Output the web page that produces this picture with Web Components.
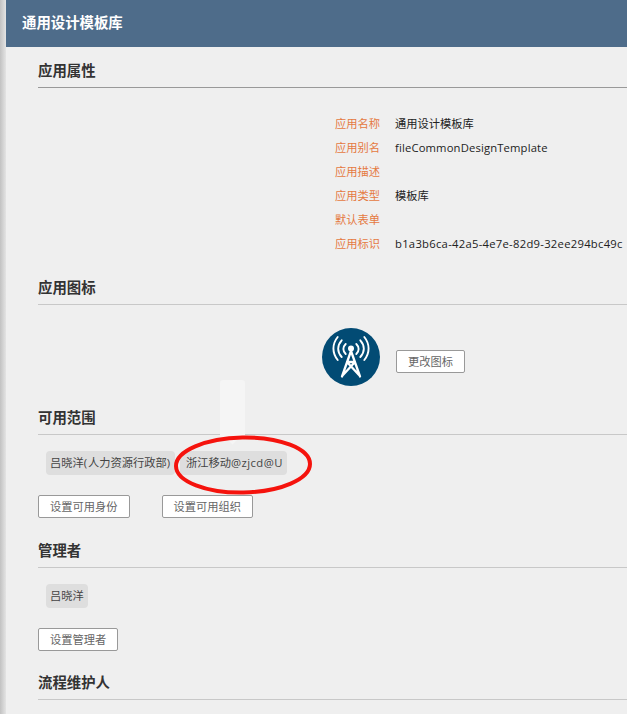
<!DOCTYPE html>
<html lang="zh">
<head>
<meta charset="utf-8">
<title>通用设计模板库</title>
<style>
  html, body { margin: 0; padding: 0; height: 714px; overflow: hidden; background: #efefef; }
  body { font-family: "Open Sans", "Noto Sans CJK SC", sans-serif; font-size: 11.25px; }
</style>
</head>
<body>
<app-page>
  <app-section heading="应用属性" strong>
    <prop-list>
      <prop-row label="应用名称">通用设计模板库</prop-row>
      <prop-row label="应用别名" spacing=".15">fileCommonDesignTemplate</prop-row>
      <prop-row label="应用描述"></prop-row>
      <prop-row label="应用类型">模板库</prop-row>
      <prop-row label="默认表单"></prop-row>
      <prop-row label="应用标识" spacing=".27">b1a3b6ca-42a5-4e7e-82d9-32ee294bc49c</prop-row>
    </prop-list>
  </app-section>
  <app-section heading="应用图标" style="--gap-top: 22px">
    <icon-picker></icon-picker>
  </app-section>
  <app-section heading="可用范围" style="--gap-top: 22px">
    <chip-row>
      <user-chip>吕晓洋<span style="letter-spacing: .9px">(</span>人力资源行政部<span style="letter-spacing: .9px">)</span></user-chip>
      <user-chip style="padding-left: 6px">浙江移动<span style="letter-spacing: .45px">@zjcd@U</span></user-chip>
    </chip-row>
    <button-row gap="32">
      <plain-button>设置可用身份</plain-button>
      <plain-button>设置可用组织</plain-button>
    </button-row>
  </app-section>
  <app-section heading="管理者" style="--gap-top: 23px">
    <chip-row>
      <user-chip>吕晓洋</user-chip>
    </chip-row>
    <button-row>
      <plain-button>设置管理者</plain-button>
    </button-row>
  </app-section>
  <app-section heading="流程维护人" style="--gap-top: 22px"></app-section>
</app-page>

<script>
class AppPage extends HTMLElement {
  constructor() {
    super();
    this.attachShadow({ mode: "open" });
  }
  connectedCallback() {
    this.shadowRoot.innerHTML = `
      <style>
        :host { display: flex; position: relative; height: 714px; overflow: hidden; color: #333; }
        .edge { flex: 0 0 6px; background: linear-gradient(to right, #c2c2c2, #e4e4e4); }
        main { flex: 1; min-width: 0; }
        header {
          height: 47px; box-sizing: border-box; display: flex; align-items: center; padding: 0 0 5px 16px;
          background: #4e6c8a; color: #fff; font-size: 14.4px; font-weight: 700;
        }
        .body { padding-left: 32px; }
        .hint {
          position: absolute; left: 220px; top: 380px; width: 25px; height: 60px;
          background: #f5f5f5; border-radius: 3px;
        }
        .hint::after {
          content: ""; position: absolute; left: 9px; bottom: -3px; width: 7px; height: 7px;
          background: #f5f5f5; transform: rotate(45deg);
        }
        .mark { position: absolute; left: 174px; top: 435px; width: 138px; height: 60px; }
      </style>
      <div class="edge"></div>
      <main>
        <header>通用设计模板库</header>
        <div class="body"><slot></slot></div>
      </main>
      <div class="hint"></div>
      <svg class="mark" viewBox="0 0 138 60" fill="none">
        <ellipse cx="69" cy="30" rx="67" ry="27.5" stroke="#f5130d" stroke-width="4" transform="rotate(-1 69 30)"/>
      </svg>
    `;
  }
}

class AppSection extends HTMLElement {
  constructor() {
    super();
    this.attachShadow({ mode: "open" });
  }
  connectedCallback() {
    const line = this.hasAttribute("strong") ? "#999" : "#c8c8c8";
    this.shadowRoot.innerHTML = `
      <style>
        :host { display: block; padding-top: var(--gap-top, 14px); }
        h2 {
          margin: 0; height: 26px; line-height: 20px; font-size: 14.4px; font-weight: 700; color: #333;
          border-bottom: 1px solid ${line};
        }
      </style>
      <h2>${this.getAttribute("heading")}</h2>
      <slot></slot>
    `;
  }
}

class PropList extends HTMLElement {
  constructor() {
    super();
    this.attachShadow({ mode: "open" });
    this.shadowRoot.innerHTML = `
      <style>
        :host { display: flex; flex-direction: column; padding: 24px 0 0 297px; }
      </style>
      <slot></slot>
    `;
  }
}

class PropRow extends HTMLElement {
  constructor() {
    super();
    this.attachShadow({ mode: "open" });
  }
  connectedCallback() {
    const spacing = this.getAttribute("spacing") || 0;
    this.shadowRoot.innerHTML = `
      <style>
        :host { display: flex; height: 24px; line-height: 24px; font-size: 11.25px; white-space: nowrap; color: #222; }
        .label { flex: 0 0 45px; text-align: right; margin-right: 15px; color: #e5793f; }
        .value { letter-spacing: ${spacing}px; }
      </style>
      <span class="label">${this.getAttribute("label")}</span>
      <span class="value"><slot></slot></span>
    `;
  }
}

class IconPicker extends HTMLElement {
  constructor() {
    super();
    this.attachShadow({ mode: "open" });
    this.shadowRoot.innerHTML = `
      <style>
        :host { display: flex; align-items: center; height: 58px; padding: 23px 0 0 284px; }
        svg { display: block; margin-right: 16px; }
        plain-button { margin-top: 8px; }
      </style>
      <svg width="58" height="58" viewBox="0 0 58 58" fill="none" stroke="#fff" stroke-linecap="round">
        <circle cx="29" cy="29" r="29" fill="#024b74" stroke="none"/>
        <path d="M15.700 9C10 16 10 25 15.700 32M42.300 9C48 16 48 25 42.300 32" stroke-width="1.900"/>
        <path d="M19.700 12.300C15 17.500 15 24 19.700 29M38.300 12.300C43 17.500 43 24 38.300 29" stroke-width="1.900"/>
        <path d="M23.700 16C20.600 19 20.600 23 23.700 26M34.300 16C37.400 19 37.400 23 34.300 26" stroke-width="1.900"/>
        <circle cx="29" cy="20.500" r="3" fill="#fff" stroke="none"/>
        <path d="M29 23L20 48.500M29 23L38 48.500M25 34H33M25 34L37 47M33 34L21 47" stroke-width="2.300"/>
      </svg>
      <plain-button>更改图标</plain-button>
    `;
  }
}

class ChipRow extends HTMLElement {
  constructor() {
    super();
    this.attachShadow({ mode: "open" });
    this.shadowRoot.innerHTML = `
      <style>
        :host { display: flex; gap: 5px; padding: 16px 0 0 8px; }
      </style>
      <slot></slot>
    `;
  }
}

class UserChip extends HTMLElement {
  constructor() {
    super();
    this.attachShadow({ mode: "open" });
    this.shadowRoot.innerHTML = `
      <style>
        :host {
          display: block; height: 24px; line-height: 24px; padding: 0 4px; border-radius: 4px;
          background: #dedede; color: #444; font-size: 11.25px; white-space: nowrap;
        }
      </style>
      <slot></slot>
    `;
  }
}

class ButtonRow extends HTMLElement {
  constructor() {
    super();
    this.attachShadow({ mode: "open" });
  }
  connectedCallback() {
    this.shadowRoot.innerHTML = `
      <style>
        :host { display: flex; gap: ${this.getAttribute("gap") || 0}px; padding-top: 20px; }
      </style>
      <slot></slot>
    `;
  }
}

class PlainButton extends HTMLElement {
  constructor() {
    super();
    this.attachShadow({ mode: "open" });
    this.shadowRoot.innerHTML = `
      <style>
        :host {
          display: block; box-sizing: border-box; height: 23px; line-height: 21px; padding: 0 11px;
          background: #fff; border: 1px solid #999; border-radius: 2px; color: #666;
          font-size: 11.25px; white-space: nowrap;
        }
      </style>
      <slot></slot>
    `;
  }
}

customElements.define("app-page", AppPage);
customElements.define("app-section", AppSection);
customElements.define("prop-list", PropList);
customElements.define("prop-row", PropRow);
customElements.define("icon-picker", IconPicker);
customElements.define("chip-row", ChipRow);
customElements.define("user-chip", UserChip);
customElements.define("button-row", ButtonRow);
customElements.define("plain-button", PlainButton);
</script>
</body>
</html>
